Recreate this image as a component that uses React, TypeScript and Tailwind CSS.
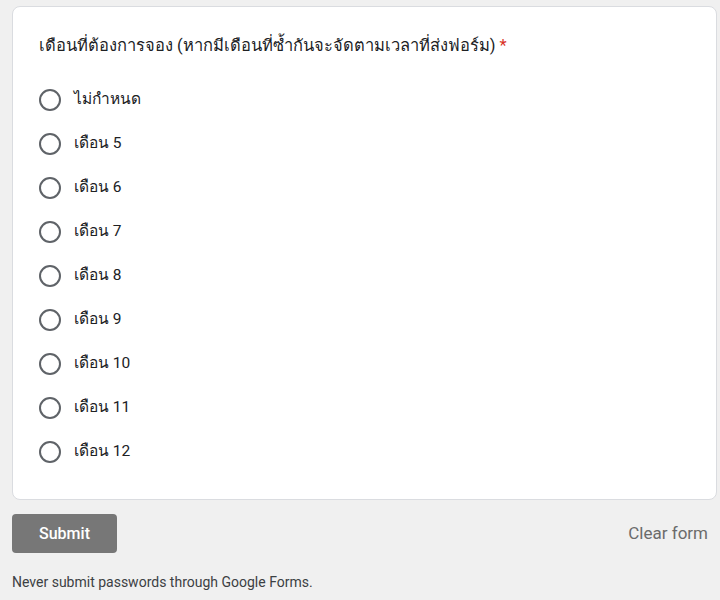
const options = ["ไม่กำหนด", "เดือน 5", "เดือน 6", "เดือน 7", "เดือน 8", "เดือน 9", "เดือน 10", "เดือน 11", "เดือน 12"];

function Radio({ label }: { label: string }) {
  return (
    <label className="flex h-[44px] items-center gap-[13px]">
      <span className="h-[22px] w-[22px] shrink-0 rounded-full border-2 border-[#5f6368]" />
      <span className="text-[15.5px] text-[#202124]">{label}</span>
    </label>
  );
}

export default function App() {
  return (
    <div className="min-h-[600px] bg-[#f0f0f0] pl-3 pr-[3px] pt-[6px] font-['Roboto','Noto_Sans',sans-serif]">
      <section className="rounded-lg border border-[#dadce0] bg-white pl-[26px] pr-6 pb-[25px] pt-[27px]">
        <h2 className="text-[16.5px] leading-6 text-[#202124]">
          เดือนที่ต้องการจอง (หากมีเดือนที่ซ้ำกันจะจัดตามเวลาที่ส่งฟอร์ม) <span className="text-[#d93025]">*</span>
        </h2>
        <div className="mt-[20px]">
          {options.map((o) => (
            <Radio key={o} label={o} />
          ))}
        </div>
      </section>
      <div className="mt-[14px] flex items-center justify-between pr-[9px]">
        <button className="h-[39px] w-[105px] rounded bg-[#777777] text-[16px] font-medium text-white">Submit</button>
        <span className="text-[17px] text-[#6b6b6b]">Clear form</span>
      </div>
      <p className="mt-[19px] text-[14px] text-[#3c4043]">Never submit passwords through Google Forms.</p>
    </div>
  );
}
